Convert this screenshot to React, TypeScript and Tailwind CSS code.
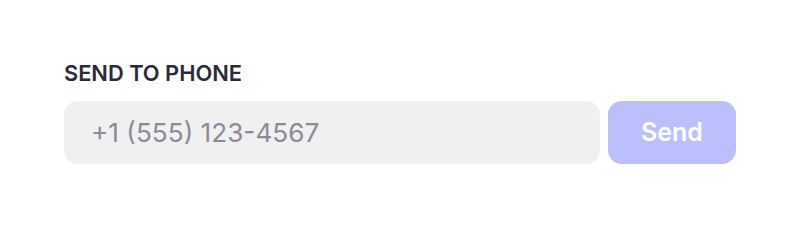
import React from 'react';

const App: React.FC = () => {
  return (
    <div className="w-[800px] h-[229px] bg-white px-16 pt-[59px]" style={{ fontFamily: 'Inter, "Liberation Sans", sans-serif' }}>
      <label className="block text-[21.8px] leading-[28px] font-semibold uppercase text-[#2b2a3a]">
        Send to phone
      </label>
      <div className="mt-[14px] flex gap-2">
        <input
          type="tel"
          placeholder="+1 (555) 123-4567"
          className="h-[63px] flex-1 rounded-[14px] bg-[#f0f0f0] px-[27px] text-[26.2px] text-[#2b2a3a] placeholder:text-[#8b8a99] outline-none"
        />
        <button
          type="button"
          disabled
          className="h-[63px] w-[128px] rounded-[14px] bg-[#bbbffc] text-[25px] font-semibold text-white"
        >
          Send
        </button>
      </div>
    </div>
  );
};

export default App;
